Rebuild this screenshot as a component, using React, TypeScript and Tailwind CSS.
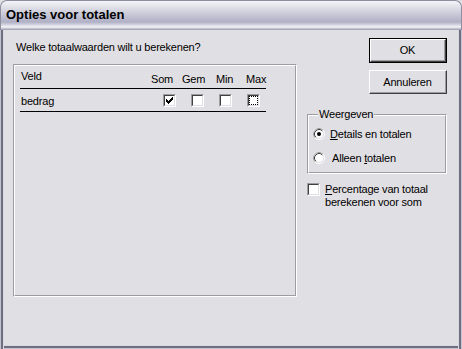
import React from "react";

function Check({ checked, focus }: { checked?: boolean; focus?: boolean }) {
  return (
    <div className="w-[13px] h-[13px] shrink-0 border border-t-[#9d9da1] border-l-[#9d9da1] border-b-white border-r-white">
      <div className="relative w-full h-full border border-t-[#404040] border-l-[#404040] border-b-[#e0dfe3] border-r-[#e0dfe3] bg-white">
        {checked && (
          <svg width="9" height="9" viewBox="0 0 9 9" className="absolute left-0 top-0">
            <path d="M1.5 3.5 L3.5 5.5 L7.5 1.5 M1.5 4.5 L3.5 6.5 L7.5 2.5 M1.5 5.5 L3.5 7.5 L7.5 3.5" stroke="#000" strokeWidth="1" fill="none" shapeRendering="crispEdges" />
          </svg>
        )}
        {focus && <div className="absolute inset-0 border border-dotted border-black" />}
      </div>
    </div>
  );
}

function Radio({ checked }: { checked?: boolean }) {
  return (
    <svg width="12" height="12" viewBox="0 0 12 12" className="shrink-0">
      <circle cx="6" cy="6" r="5.5" fill="none" stroke="#ffffff" />
      <path d="M2.11 9.89 A5.5 5.5 0 0 1 9.89 2.11" fill="none" stroke="#9d9da1" />
      <circle cx="6" cy="6" r="4.5" fill="#ffffff" stroke="#e0dfe3" />
      <path d="M2.82 9.18 A4.5 4.5 0 0 1 9.18 2.82" fill="none" stroke="#404040" />
      {checked && <circle cx="6" cy="6" r="2" fill="#000" />}
    </svg>
  );
}

export default function App() {
  return (
    <div className="w-[462px] h-[349px] flex flex-col text-[11px] leading-[13px] tracking-[-0.2px] text-black font-['Liberation_Sans',Arial,sans-serif] bg-[#e0dfe3]">
      {/* Title bar */}
      <div className="h-[30px] shrink-0 rounded-t-[7px] border border-b-0 border-[#8e8ea0] flex items-center pl-[5px] pb-[1px] bg-[linear-gradient(to_bottom,#f4f4f8_0px,#e4e4ec_5px,#d0d0dc_11px,#bdbdd0_17px,#b0b0c6_21px,#d6d6e2_24px,#f4f4f8_26px,#b4b4c4_28px,#9a9aae_29px)]">
        <span className="font-bold text-[13px] leading-[16px] tracking-normal">Opties voor totalen</span>
      </div>

      {/* Body */}
      <div className="flex-1 flex pl-[13px] pr-[15px] pb-[4px] shadow-[inset_1px_0_#c4c4d0,inset_3px_0_#6e6e80,inset_4px_0_#d8d8e0,inset_-1px_0_#c4c4d0,inset_-3px_0_#6e6e80,inset_-4px_0_#d8d8e0,inset_0_-1px_#c4c4d0,inset_0_-3px_#6e6e80,inset_0_-4px_#d8d8e0]">
        {/* Left column */}
        <div className="w-[284px] shrink-0 flex flex-col pt-[11px]">
          <div className="pl-[3px]">Welke totaalwaarden wilt u berekenen?</div>
          <div className="mt-[10px] h-[233px] border border-t-[#9d9da1] border-l-[#9d9da1] border-b-white border-r-white">
            <div className="h-full border border-t-white border-l-white border-b-[#9d9da1] border-r-[#9d9da1] pl-[5px]">
              <div className="w-[246px]">
                <div className="h-[23px] flex border-b border-black">
                  <div className="w-[131px] pl-[1px] pt-[4px]">Veld</div>
                  <div className="w-[31px] pt-[7px]">Som</div>
                  <div className="w-[34px] pt-[7px]">Gem</div>
                  <div className="w-[30px] pt-[7px]">Min</div>
                  <div className="w-[20px] pt-[7px]">Max</div>
                </div>
                <div className="h-[23px] flex items-start border-b border-black">
                  <div className="w-[131px] pl-[1px] pt-[6px]">bedrag</div>
                  <div className="w-[31px] pl-[12px] pt-[5px]"><Check checked /></div>
                  <div className="w-[34px] pl-[9px] pt-[5px]"><Check /></div>
                  <div className="w-[30px] pl-[3px] pt-[5px]"><Check /></div>
                  <div className="w-[20px] pl-[1px] pt-[5px]"><Check focus /></div>
                </div>
              </div>
            </div>
          </div>
        </div>

        {/* Right column */}
        <div className="ml-[10px] w-[140px] shrink-0 flex flex-col pt-[8px]">
          <div className="ml-[62px] w-[78px] h-[25px] border border-black">
            <div className="h-full border border-t-white border-l-white border-b-[#404040] border-r-[#404040]">
              <div className="h-full flex items-center justify-center border-b border-r border-[#9d9da1] pt-[1px]">OK</div>
            </div>
          </div>
          <div className="mt-[7px] ml-[62px] w-[78px] h-[24px] border border-t-white border-l-white border-b-[#404040] border-r-[#404040]">
            <div className="h-full flex items-center justify-center border-b border-r border-[#9d9da1] pt-[1px]">Annuleren</div>
          </div>

          <div className="relative mt-[20px] h-[60px] border border-t-[#9d9da1] border-l-[#9d9da1] border-b-white border-r-white">
            <span className="absolute left-[10px] top-[-7px] px-[1px] bg-[#e0dfe3]">Weergeven</span>
            <div className="h-full border border-t-white border-l-white border-b-[#9d9da1] border-r-[#9d9da1] pl-[4px] pt-[12px] flex flex-col gap-[12px]">
              <div className="h-[12px] flex items-center">
                <Radio checked />
                <span className="ml-[5px] mt-[1px]"><span className="underline">D</span>etails en totalen</span>
              </div>
              <div className="h-[12px] flex items-center">
                <Radio />
                <span className="ml-[7px] mt-[1px]">Alleen <span className="underline">t</span>otalen</span>
              </div>
            </div>
          </div>

          <div className="mt-[9px] flex items-start">
            <Check />
            <div className="ml-[5px]">
              <span className="underline">P</span>ercentage van totaal<br />berekenen voor som
            </div>
          </div>
        </div>
      </div>
    </div>
  );
}
